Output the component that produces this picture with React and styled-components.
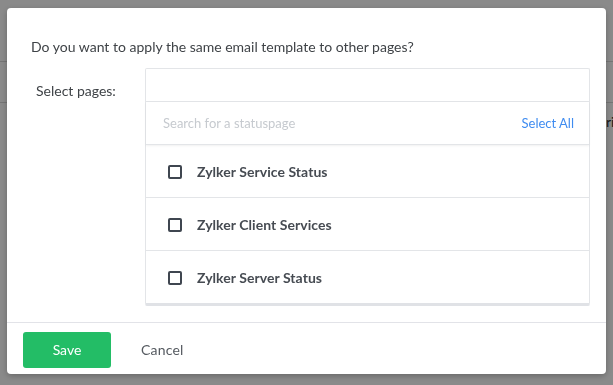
import React from 'react';
import styled, { createGlobalStyle } from 'styled-components';

const GlobalStyle = createGlobalStyle`
  html, body {
    margin: 0;
    padding: 0;
    background: #ffffff;
    font-family: Lato, "Open Sans", sans-serif;
    -webkit-font-smoothing: antialiased;
  }
`;

// page that lies under the overlay
const Page = styled.div`
  width: 613px;
  height: 385px;
  overflow: hidden;
`;

const PageHeader = styled.div`
  height: 61px;
  border-bottom: 1px solid #d8d8d8;
`;

const PageRow = styled.div`
  height: 40px;
  border-bottom: 1px solid #d8d8d8;
`;

const PageText = styled.div`
  padding-left: 606px;
  white-space: nowrap;
  font-size: 14px;
  line-height: 38px;
  color: #333;
`;

const Backdrop = styled.div`
  position: fixed;
  inset: 0;
  background: rgba(0, 0, 0, 0.46);
  display: flex;
  align-items: flex-start;
  padding: 8px 0 0 7px;
`;

const Dialog = styled.div`
  width: 599px;
  height: 366px;
  background: #ffffff;
  border-radius: 4px;
  box-shadow: 0 2px 6px rgba(0, 0, 0, 0.25);
  display: flex;
  flex-direction: column;
`;

const Body = styled.div`
  flex: 1;
  padding: 29px 16px 0 24px;
`;

const Question = styled.p`
  margin: 0 0 11px;
  font-size: 14px;
  line-height: 20px;
  color: #3f4347;
`;

const FormRow = styled.div`
  display: flex;
  align-items: flex-start;
`;

const Label = styled.label`
  width: 114px;
  padding-left: 5px;
  box-sizing: border-box;
  font-size: 14px;
  line-height: 20px;
  margin-top: 13px;
  color: #3f4347;
`;

const PickerBox = styled.div`
  width: 445px;
  border: 1px solid #e3e5e8;
  border-bottom: 3px solid #e0e2e6;
  border-radius: 2px;
  box-sizing: border-box;
`;

const EmptyInput = styled.div`
  height: 32px;
  border-bottom: 1px solid #e3e5e8;
`;

const SearchRow = styled.div`
  height: 42px;
  display: flex;
  align-items: center;
  justify-content: space-between;
  padding: 0 15px 0 17px;
  border-bottom: 1px solid #e3e5e8;
  box-shadow: 0 1px 2px rgba(0, 0, 0, 0.06);
  font-size: 13px;
`;

const SearchInput = styled.input`
  border: none;
  outline: none;
  padding: 0;
  font-family: inherit;
  font-size: 13px;
  color: #333;
  width: 250px;
  background: transparent;

  &::placeholder {
    color: #c6cacf;
  }
`;

const SelectAll = styled.a`
  color: #3f8cf0;
  cursor: pointer;
`;

const Item = styled.div`
  height: 52px;
  display: flex;
  align-items: center;
  padding-left: 22px;
  border-top: ${({ first }) => (first ? 'none' : '1px solid #e3e5e8')};
  font-size: 14px;
  font-weight: 700;
  letter-spacing: 0.05px;
  color: #464b52;
`;

const Check = styled.span`
  width: 14px;
  height: 14px;
  border: 2px solid #3f4650;
  border-radius: 2px;
  box-sizing: border-box;
  margin-right: 15px;
  margin-top: 1px;
`;

const Footer = styled.div`
  height: 52px;
  border-top: 1px solid #e2e3e8;
  display: flex;
  align-items: center;
  padding: 0 16px;
  box-sizing: border-box;
`;

const SaveButton = styled.button`
  width: 88px;
  height: 36px;
  border: none;
  border-radius: 3px;
  background: #23bd66;
  color: #ffffff;
  font-family: inherit;
  font-size: 14px;
  margin-top: 2px;
  cursor: pointer;
`;

const CancelButton = styled.button`
  border: none;
  background: transparent;
  padding: 0;
  margin: 2px 0 0 30px;
  font-family: inherit;
  font-size: 14px;
  letter-spacing: 0.2px;
  color: #555a60;
  cursor: pointer;
`;

const pages = ['Zylker Service Status', 'Zylker Client Services', 'Zylker Server Status'];

const App = () => (
  <>
    <GlobalStyle />
    <Page>
      <PageHeader />
      <PageRow />
      <PageText>ri</PageText>
    </Page>
    <Backdrop>
      <Dialog>
        <Body>
          <Question>Do you want to apply the same email template to other pages?</Question>
          <FormRow>
            <Label>Select pages:</Label>
            <PickerBox>
              <EmptyInput />
              <SearchRow>
                <SearchInput placeholder="Search for a statuspage" />
                <SelectAll>Select All</SelectAll>
              </SearchRow>
              {pages.map((p, i) => (
                <Item key={p} first={i === 0}>
                  <Check />
                  {p}
                </Item>
              ))}
            </PickerBox>
          </FormRow>
        </Body>
        <Footer>
          <SaveButton>Save</SaveButton>
          <CancelButton>Cancel</CancelButton>
        </Footer>
      </Dialog>
    </Backdrop>
  </>
);

export default App;
